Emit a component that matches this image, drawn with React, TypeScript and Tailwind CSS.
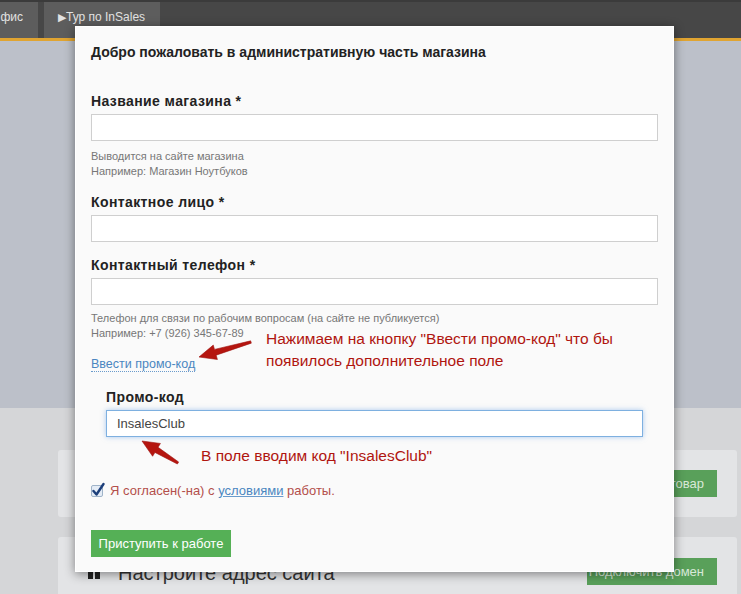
const font = { fontFamily: '"Liberation Sans", Arial, sans-serif' };

const Field = ({ label, children }: { label: string; children?: React.ReactNode }) => (
  <div>
    <div className="text-[14px] font-bold leading-[18px] tracking-[0.4px] text-[#222]">{label}</div>
    <div className="mt-[4px] h-[27px] border border-[#cfcfcf] bg-white" />
    {children}
  </div>
);

const Arrow = ({ x1, y1, x2, y2 }: { x1: number; y1: number; x2: number; y2: number }) => {
  // tapered arrow from tail (x1,y1) to tip (x2,y2)
  const dx = x2 - x1;
  const dy = y2 - y1;
  const len = Math.hypot(dx, dy);
  const ux = dx / len;
  const uy = dy / len;
  const px = -uy;
  const py = ux;
  const head = 17;
  const hx = x2 - ux * head;
  const hy = y2 - uy * head;
  const pts = [
    [x1 + px * 1.2, y1 + py * 1.2],
    [hx + px * 3, hy + py * 3],
    [hx + px * 7.5, hy + py * 7.5],
    [x2, y2],
    [hx - px * 7.5, hy - py * 7.5],
    [hx - px * 3, hy - py * 3],
    [x1 - px * 1.2, y1 - py * 1.2],
  ]
    .map((p) => p.join(","))
    .join(" ");
  return <polygon points={pts} fill="#b5150f" stroke="#9e1410" strokeWidth="0.6" strokeLinejoin="round" />;
};

export default function App() {
  return (
    <div className="relative h-[594px] w-[741px] overflow-hidden bg-[#d5d6d8]" style={font}>
      {/* top bar */}
      <div className="flex h-[38px] items-stretch gap-[6px] border-t-2 border-[#3b3b3b] bg-[#474747] text-[12px] text-[#e2e2e2]">
        <div className="flex w-[38px] items-center justify-end bg-[#5d5d5d] pr-[15px] pb-[6px]">фис</div>
        <div className="flex w-[116px] items-center bg-[#5d5d5d] pb-[6px] pl-[14px]">
          <span className="text-[11px]">▶</span>
          <span>Тур по InSales</span>
        </div>
      </div>
      <div className="h-[3px] bg-[#e0a431]" />
      <div className="h-[367px] bg-[#bcc0c9]" />

      {/* dashboard cards behind the modal */}
      <div className="ml-[58px] mr-[4px] mt-[42px] flex flex-col gap-[20px]">
        <div className="flex h-[67px] items-center justify-end rounded-[3px] bg-[#e3e4e6] pr-[20px]">
          <div className="flex h-[27px] w-[130px] items-center justify-end bg-[#59a05a] pr-[13px] text-[13px] text-[#d8e8d8]">
            Добавить товар
          </div>
        </div>
        <div className="flex h-[67px] items-start justify-between rounded-[3px] bg-[#e3e4e6] pl-[30px] pr-[20px] pt-[21px]">
          <div className="flex items-center gap-[18px] text-[20px] text-[#333]">
            <span className="flex gap-[2px]">
              <span className="h-[12px] w-[5px] bg-[#222]" />
              <span className="h-[12px] w-[5px] bg-[#222]" />
            </span>
            <span>Настройте адрес сайта</span>
          </div>
          <div className="flex h-[27px] w-[130px] items-center justify-end bg-[#59a05a] pr-[13px] text-[13px] text-[#d8e8d8]">
            Подключить домен
          </div>
        </div>
      </div>

      {/* modal */}
      <div className="absolute left-[75px] top-[26px] h-[546px] w-[599px] border border-white bg-[#fafafa] px-[15px] pt-[15px] shadow-[0_2px_10px_rgba(0,0,0,0.45)]">
        <div className="text-[14px] font-bold leading-[20px] text-[#222]">
          Добро пожаловать в административную часть магазина
        </div>

        <div className="mt-[30px]">
          <Field label="Название магазина *">
            <div className="mt-[8px] text-[11px] leading-[15px] text-[#777]">
              <div>Выводится на сайте магазина</div>
              <div>Например: Магазин Ноутбуков</div>
            </div>
          </Field>
        </div>

        <div className="mt-[14px]">
          <Field label="Контактное лицо *" />
        </div>

        <div className="mt-[14px]">
          <Field label="Контактный телефон *">
            <div className="mt-[6px] text-[11px] leading-[15px] text-[#777]">
              <div>Телефон для связи по рабочим вопросам (на сайте не публикуется)</div>
              <div>Например: +7 (926) 345-67-89</div>
            </div>
          </Field>
        </div>

        <div className="mt-[14px] text-[12.5px] leading-[18px]">
          <span className="border-b border-dotted border-[#6a9bcc] text-[#4a86c0]">Ввести промо-код</span>
        </div>

        <div className="mt-[15px] px-[15px]">
          <div className="text-[14px] font-bold leading-[18px] tracking-[0.4px] text-[#222]">Промо-код</div>
          <div className="mt-[4px] flex h-[27px] items-center border border-[#7eb0e0] bg-white pl-[10px] text-[13px] text-[#444] shadow-[0_0_5px_rgba(102,160,230,0.55)]">
            InsalesClub
          </div>
        </div>

        <div className="mt-[45px] flex items-center gap-[7px] text-[13px] leading-[18px] text-[#b34f4b]">
          <span className="relative h-[12px] w-[12px] rounded-[2px] border border-[#9fb3c8] bg-[#e4ecf6]">
            <svg viewBox="0 0 14 14" className="absolute -left-[1px] -top-[4px] h-[15px] w-[14px]">
              <path d="M2.5 8.5 L5.5 12 L12.5 1.5" fill="none" stroke="#1d3f7a" strokeWidth="2.4" strokeLinecap="round" strokeLinejoin="round" />
            </svg>
          </span>
          <span>
            Я согласен(-на) с{" "}
            <span className="text-[#4a86c0] underline decoration-[#6a9bcc]">условиями</span> работы.
          </span>
        </div>

        <div className="mt-[30px] flex h-[27px] w-[140px] items-center justify-center bg-[#55b056] text-[13px] text-white">
          Приступить к работе
        </div>
      </div>

      {/* annotations */}
      <div className="absolute left-[266px] top-[328px] text-[15.5px] leading-[22px] text-[#b0150f]">
        <div>Нажимаем на кнопку "Ввести промо-код" что бы</div>
        <div>появилось дополнительное поле</div>
      </div>
      <div className="absolute left-[201px] top-[445px] text-[15.5px] leading-[22px] text-[#b0150f]">
        В поле вводим код "InsalesClub"
      </div>
      <svg className="pointer-events-none absolute left-0 top-0" width="741" height="594">
        <Arrow x1={251} y1={342} x2={199} y2={357} />
        <Arrow x1={178} y1={463} x2={142} y2={441} />
      </svg>
    </div>
  );
}
